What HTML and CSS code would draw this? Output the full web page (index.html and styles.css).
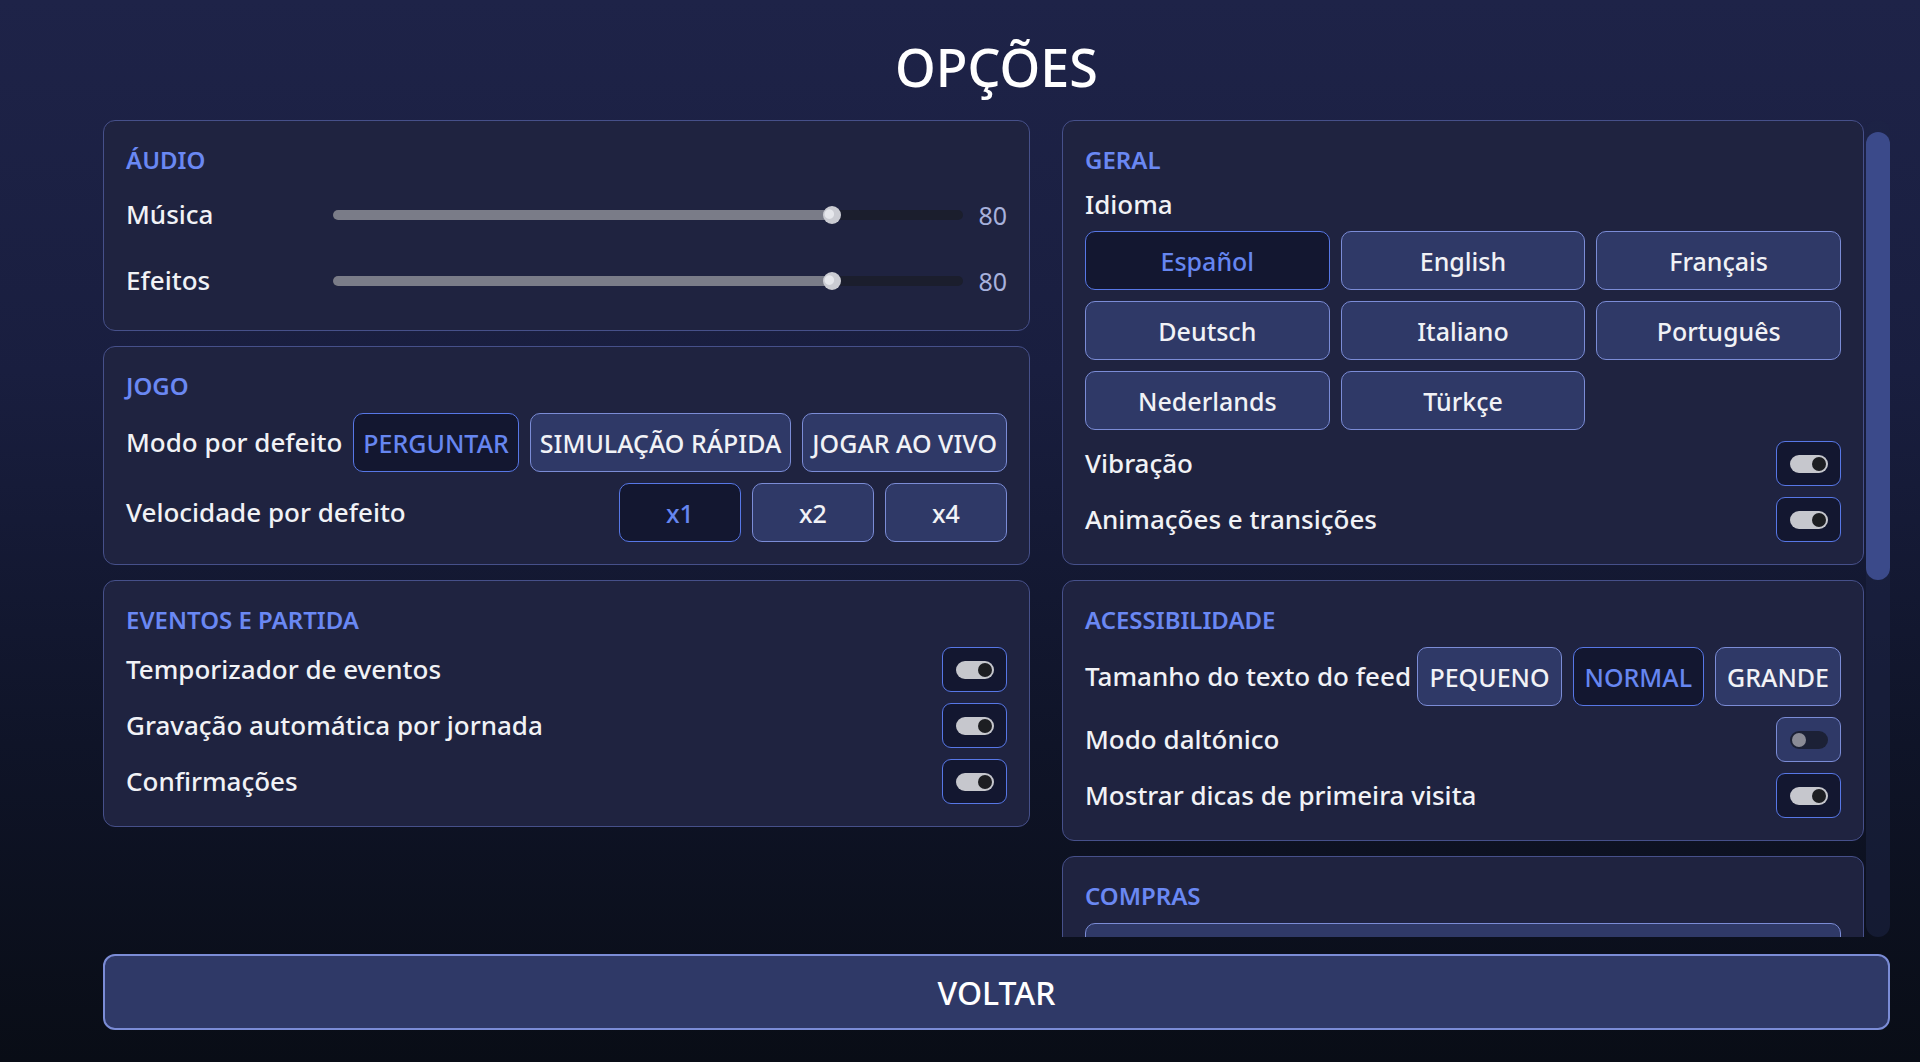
FILE: index.html
```html
<!DOCTYPE html>
<html lang="pt">
<head>
    <meta charset="UTF-8">
    <meta name="viewport" content="width=device-width, initial-scale=1.0">
    <title>Opções</title>
    <link rel="stylesheet" href="styles.css">
</head>
<body>

    <div class="screen">
        <h1 class="title">OPÇÕES</h1>

        <div class="content">
            <div class="col col-left">

                <section class="panel">
                    <h2 class="panel-title">ÁUDIO</h2>
                    <div class="row row-slider">
                        <span class="label label-fixed">Música</span>
                        <div class="slider" style="--v: 0.8">
                            <div class="slider-fill"></div>
                            <div class="slider-thumb"></div>
                        </div>
                        <span class="value">80</span>
                    </div>
                    <div class="row row-slider">
                        <span class="label label-fixed">Efeitos</span>
                        <div class="slider" style="--v: 0.8">
                            <div class="slider-fill"></div>
                            <div class="slider-thumb"></div>
                        </div>
                        <span class="value">80</span>
                    </div>
                </section>

                <section class="panel">
                    <h2 class="panel-title">JOGO</h2>
                    <div class="row">
                        <span class="label">Modo por defeito</span>
                        <div class="choices">
                            <button class="btn selected">PERGUNTAR</button>
                            <button class="btn">SIMULAÇÃO RÁPIDA</button>
                            <button class="btn">JOGAR AO VIVO</button>
                        </div>
                    </div>
                    <div class="row">
                        <span class="label">Velocidade por defeito</span>
                        <div class="choices">
                            <button class="btn btn-speed selected">x1</button>
                            <button class="btn btn-speed">x2</button>
                            <button class="btn btn-speed">x4</button>
                        </div>
                    </div>
                </section>

                <section class="panel">
                    <h2 class="panel-title">EVENTOS E PARTIDA</h2>
                    <div class="row row-toggle">
                        <span class="label">Temporizador de eventos</span>
                        <button class="toggle on"><span class="switch"><span class="knob"></span></span></button>
                    </div>
                    <div class="row row-toggle">
                        <span class="label">Gravação automática por jornada</span>
                        <button class="toggle on"><span class="switch"><span class="knob"></span></span></button>
                    </div>
                    <div class="row row-toggle">
                        <span class="label">Confirmações</span>
                        <button class="toggle on"><span class="switch"><span class="knob"></span></span></button>
                    </div>
                </section>

            </div>

            <div class="right-wrap">
                <div class="col col-right">

                    <section class="panel">
                        <h2 class="panel-title">GERAL</h2>
                        <span class="label label-block">Idioma</span>
                        <div class="lang-grid">
                            <button class="btn selected">Español</button>
                            <button class="btn">English</button>
                            <button class="btn">Français</button>
                            <button class="btn">Deutsch</button>
                            <button class="btn">Italiano</button>
                            <button class="btn">Português</button>
                            <button class="btn">Nederlands</button>
                            <button class="btn">Türkçe</button>
                        </div>
                        <div class="row row-toggle">
                            <span class="label">Vibração</span>
                            <button class="toggle on"><span class="switch"><span class="knob"></span></span></button>
                        </div>
                        <div class="row row-toggle">
                            <span class="label">Animações e transições</span>
                            <button class="toggle on"><span class="switch"><span class="knob"></span></span></button>
                        </div>
                    </section>

                    <section class="panel">
                        <h2 class="panel-title">ACESSIBILIDADE</h2>
                        <div class="row">
                            <span class="label">Tamanho do texto do feed</span>
                            <div class="choices">
                                <button class="btn btn-feed">PEQUENO</button>
                                <button class="btn btn-feed selected">NORMAL</button>
                                <button class="btn btn-feed">GRANDE</button>
                            </div>
                        </div>
                        <div class="row row-toggle">
                            <span class="label">Modo daltónico</span>
                            <button class="toggle"><span class="switch"><span class="knob"></span></span></button>
                        </div>
                        <div class="row row-toggle">
                            <span class="label">Mostrar dicas de primeira visita</span>
                            <button class="toggle on"><span class="switch"><span class="knob"></span></span></button>
                        </div>
                    </section>

                    <section class="panel">
                        <h2 class="panel-title">COMPRAS</h2>
                        <button class="btn btn-wide" aria-label="Restaurar compras"></button>
                    </section>

                </div>

                <div class="scrollbar">
                    <div class="scroll-thumb"></div>
                </div>
            </div>
        </div>

        <button class="back-btn">VOLTAR</button>
    </div>

</body>
</html>
```

FILE: styles.css
```css
* {
    box-sizing: border-box;
}

body {
    margin: 0;
    height: 1062px;
    overflow: hidden;
    font-family: "Noto Sans", "Open Sans", sans-serif;
    color: #f1f2f6;
    background: linear-gradient(180deg, #1e2348 0%, #191e3f 35%, #0f1428 70%, #090d16 100%);
}

.screen {
    display: flex;
    flex-direction: column;
    height: 1062px;
    padding: 31px 30px 0 103px;
}

.title {
    margin: 0 0 18px;
    font-size: 52px;
    font-weight: 500;
    line-height: 71px;
    text-align: center;
    color: #fff;
}

.content {
    display: flex;
    gap: 32px;
    height: 817px;
}

.col {
    display: flex;
    flex-direction: column;
    gap: 15px;
}

.col-left {
    width: 927px;
    flex-shrink: 0;
}

.right-wrap {
    flex: 1;
    min-width: 0;
    display: flex;
    gap: 2px;
}

.col-right {
    flex: 1;
    min-width: 0;
    overflow: hidden;
}

.scrollbar {
    flex: 0 0 24px;
    padding-top: 12px;
    background: rgba(30, 36, 70, 0.55);
    border-radius: 12px;
}

.scroll-thumb {
    height: 448px;
    background: #3b4a8a;
    border-radius: 12px;
}

/* panels */

.panel {
    flex-shrink: 0;
    display: flex;
    flex-direction: column;
    gap: 11px;
    padding: 22px;
    background: #1f2340;
    border: 1px solid #46508a;
    border-radius: 12px;
}

.panel-title {
    margin: 0;
    font-size: 24px;
    font-weight: 600;
    line-height: 33px;
    color: #6a88f3;
}

.row {
    display: flex;
    align-items: center;
    justify-content: space-between;
    min-height: 59px;
}

.row-slider {
    min-height: 55px;
    height: 55px;
    gap: 14px;
    justify-content: flex-start;
}

.row-toggle {
    min-height: 45px;
}

.label {
    font-size: 26px;
    font-weight: 500;
    line-height: 35px;
    white-space: nowrap;
}

.label-fixed {
    flex: 0 0 193px;
}

.label-block {
    display: block;
    margin-bottom: -2px;
}

.value {
    min-width: 30px;
    font-size: 25px;
    text-align: right;
    color: #a7b1dc;
}

/* slider */

.slider {
    position: relative;
    flex: 1;
    height: 10px;
    background: #1b1e2d;
    border-radius: 5px;
}

.slider-fill {
    position: absolute;
    left: 0;
    top: 0;
    bottom: 0;
    width: calc(9px + (100% - 18px) * var(--v));
    background: #7a7c88;
    border-radius: 5px;
}

.slider-thumb {
    position: absolute;
    top: -4px;
    left: calc((100% - 18px) * var(--v));
    width: 18px;
    height: 18px;
    border-radius: 50%;
    background: radial-gradient(circle at 35% 45%, #e6e7ec 0 28%, #cbccd3 34%);
}

/* buttons */

.choices {
    display: flex;
    gap: 11px;
}

.btn {
    height: 59px;
    padding: 0 9px;
    font-family: inherit;
    font-size: 25px;
    font-weight: 500;
    color: #f1f2f6;
    background: #2f3967;
    border: 1px solid #7b8cd6;
    border-radius: 10px;
    cursor: pointer;
    white-space: nowrap;
}

.btn.selected {
    color: #6686f0;
    background: #131730;
    border-color: #5777e6;
}

.btn-speed {
    width: 122px;
}

.btn-feed {
    padding: 0 11px;
}

.btn-wide {
    width: 100%;
}

.lang-grid {
    display: grid;
    grid-template-columns: repeat(3, 1fr);
    gap: 11px;
}

/* toggles */

.toggle {
    display: flex;
    align-items: center;
    justify-content: center;
    width: 65px;
    height: 45px;
    padding: 0;
    background: #2f3967;
    border: 1px solid #7b8cd6;
    border-radius: 9px;
    cursor: pointer;
}

.toggle.on {
    background: #131730;
    border-color: #5777e6;
}

.switch {
    position: relative;
    width: 38px;
    height: 18px;
    border-radius: 9px;
    background: #1c2136;
}

.knob {
    position: absolute;
    top: 2px;
    left: 2px;
    width: 14px;
    height: 14px;
    border-radius: 50%;
    background: #8a8b96;
}

.toggle.on .switch {
    background: #c6c7cd;
}

.toggle.on .knob {
    left: 22px;
    background: #1d1e22;
}

/* back */

.back-btn {
    flex-shrink: 0;
    height: 76px;
    margin-top: 17px;
    font-family: inherit;
    font-size: 32px;
    font-weight: 500;
    color: #fff;
    background: #2f3967;
    border: 2px solid #7b8cd6;
    border-radius: 12px;
    cursor: pointer;
}
```
